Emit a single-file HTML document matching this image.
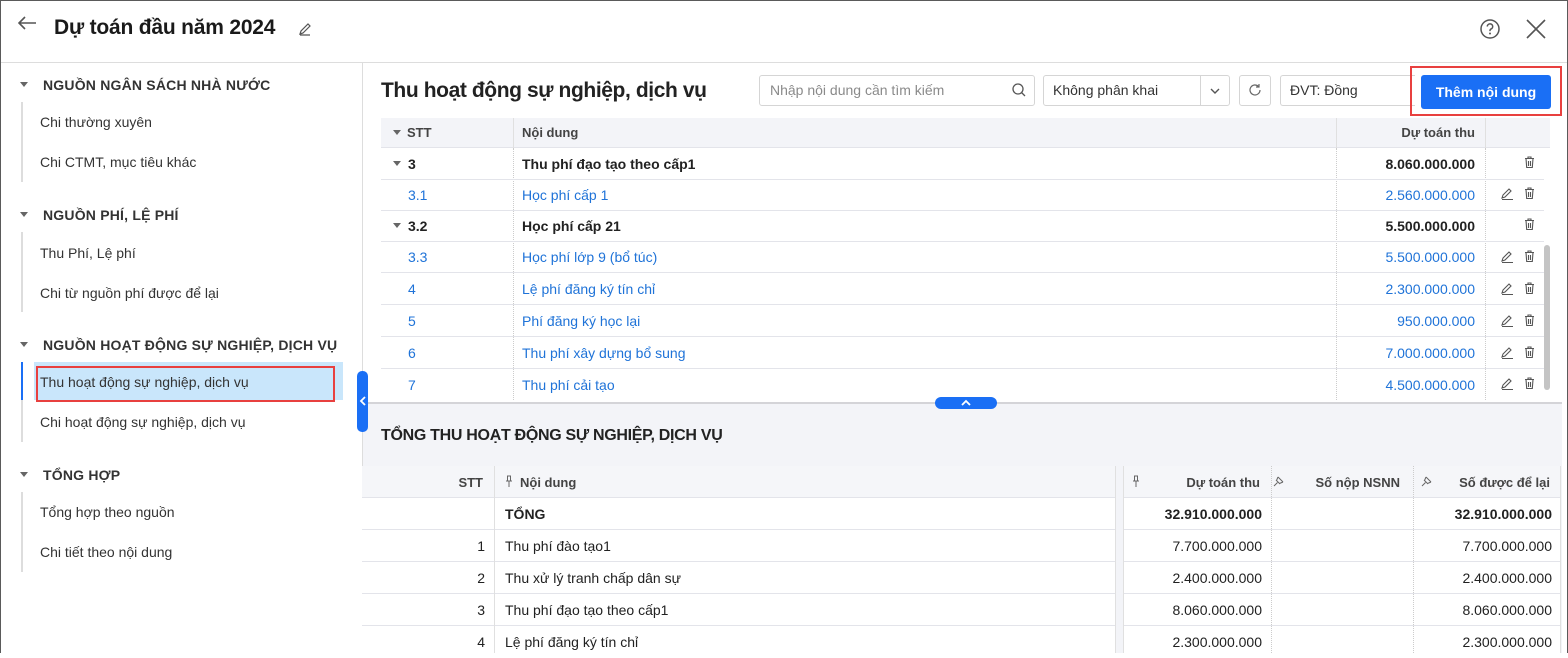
<!DOCTYPE html>
<html><head><meta charset="utf-8"><style>
*{box-sizing:border-box;margin:0;padding:0}
body{width:1568px;height:653px;overflow:hidden;background:#fff;font-family:"Liberation Sans",sans-serif;color:#212121;font-size:14px;position:relative}
.a{position:absolute;white-space:nowrap}
.frame{position:absolute;left:0;top:0;width:1568px;height:653px;border:1px solid #5a5a5a;border-bottom:none;pointer-events:none;z-index:50}
.sb h4{position:absolute;left:43px;font-size:14px;font-weight:bold;letter-spacing:.2px;color:#333}
.tri{position:absolute;width:0;height:0;border-left:4px solid transparent;border-right:4px solid transparent;border-top:5px solid #666}
.item{position:absolute;left:40px;font-size:14px;color:#333}
.vl{position:absolute;left:21px;width:2px;background:#ddd}
.row{position:absolute;left:381px;width:1163px;height:32px;border-bottom:1px solid #e3e4ea}
.row span{position:absolute;top:8px}
.blue{color:#1f73d8}
.b{font-weight:bold;color:#222}
.r2{position:absolute;left:362px;width:1198px;height:32px;border-bottom:1px solid #e3e4ea;background:#fff}
.r2 span{position:absolute;top:8px}
</style></head><body>
<div class="frame"></div>
<svg class="a" style="left:16px;top:14px" width="22" height="18" viewBox="0 0 22 18"><path d="M20 9H3M9 3L3 9l6 6" stroke="#555" stroke-width="1.6" fill="none"/></svg>
<div class="a" style="left:54px;top:16px;font-size:21px;font-weight:bold;color:#1a1a1a;letter-spacing:-0.2px">Dự toán đầu năm 2024</div>
<svg class="a" style="left:297px;top:21px" width="16" height="16" viewBox="0 0 16 16"><path d="M3 13l1-3 7-7 2 2-7 7-3 1zM3 14h10" stroke="#555" stroke-width="1.2" fill="none"/></svg>
<svg class="a" style="left:1479px;top:18px" width="22" height="22" viewBox="0 0 22 22"><circle cx="11" cy="11" r="9" stroke="#555" stroke-width="1.5" fill="none"/><path d="M8.3 8.5a2.7 2.7 0 1 1 3.5 2.6c-.6.3-.8.7-.8 1.4v.6" stroke="#555" stroke-width="1.5" fill="none"/><circle cx="11" cy="15.5" r="1" fill="#555"/></svg>
<svg class="a" style="left:1525px;top:18px" width="22" height="22" viewBox="0 0 22 22"><path d="M2 2l18 18M20 2L2 20" stroke="#555" stroke-width="1.6"/></svg>
<div class="a" style="left:0;top:62px;width:1568px;height:1px;background:#ddd"></div>
<div class="sb">
<div class="tri" style="left:20px;top:82px"></div><h4 style="top:77px">NGUỒN NGÂN SÁCH NHÀ NƯỚC</h4>
<div class="vl" style="top:102px;height:80px"></div>
<div class="item" style="top:114px">Chi thường xuyên</div>
<div class="item" style="top:154px">Chi CTMT, mục tiêu khác</div>
<div class="tri" style="left:20px;top:212px"></div><h4 style="top:207px">NGUỒN PHÍ, LỆ PHÍ</h4>
<div class="vl" style="top:232px;height:80px"></div>
<div class="item" style="top:245px">Thu Phí, Lệ phí</div>
<div class="item" style="top:285px">Chi từ nguồn phí được để lại</div>
<div class="tri" style="left:20px;top:342px"></div><h4 style="top:337px">NGUỒN HOẠT ĐỘNG SỰ NGHIỆP, DỊCH VỤ</h4>
<div class="vl" style="top:362px;height:80px"></div>
<div class="a" style="left:21px;top:362px;width:2px;height:38px;background:#1a6ff5"></div>
<div class="a" style="left:34px;top:362px;width:309px;height:38px;background:#c9e6fb"></div>
<div class="a" style="left:36px;top:366px;width:299px;height:36px;border:2px solid #e8403f"></div>
<div class="item" style="top:374px">Thu hoạt động sự nghiệp, dịch vụ</div>
<div class="item" style="top:414px">Chi hoạt động sự nghiệp, dịch vụ</div>
<div class="tri" style="left:20px;top:472px"></div><h4 style="top:467px">TỔNG HỢP</h4>
<div class="vl" style="top:492px;height:80px"></div>
<div class="item" style="top:504px">Tổng hợp theo nguồn</div>
<div class="item" style="top:544px">Chi tiết theo nội dung</div>
</div>
<div class="a" style="left:362px;top:63px;width:1px;height:590px;background:#ddd"></div>
<div class="a" style="left:357px;top:371px;width:11px;height:61px;background:#1a6ff5;border-radius:5px;z-index:5"></div>
<svg class="a" style="left:359px;top:395px;z-index:6" width="8" height="12" viewBox="0 0 8 12"><path d="M6 2L2 6l4 4" stroke="#fff" stroke-width="1.8" fill="none"/></svg>
<div class="a" style="left:381px;top:79px;font-size:21px;font-weight:bold;color:#222;letter-spacing:-0.4px">Thu hoạt động sự nghiệp, dịch vụ</div>
<div class="a" style="left:759px;top:75px;width:276px;height:31px;border:1px solid #d5d5d5;border-radius:3px"></div>
<div class="a" style="left:770px;top:82px;color:#8a8a8a">Nhập nội dung cần tìm kiếm</div>
<svg class="a" style="left:1011px;top:82px" width="16" height="16" viewBox="0 0 16 16"><circle cx="7" cy="7" r="5" stroke="#555" stroke-width="1.3" fill="none"/><path d="M10.5 10.5l3.5 3.5" stroke="#555" stroke-width="1.3"/></svg>
<div class="a" style="left:1043px;top:75px;width:187px;height:31px;border:1px solid #d5d5d5;border-radius:3px"></div>
<div class="a" style="left:1200px;top:75px;width:1px;height:31px;background:#d5d5d5"></div>
<div class="a" style="left:1053px;top:82px;color:#333">Không phân khai</div>
<svg class="a" style="left:1209px;top:86px" width="12" height="10" viewBox="0 0 12 10"><path d="M2 3l4 4 4-4" stroke="#555" stroke-width="1.4" fill="none"/></svg>
<div class="a" style="left:1239px;top:75px;width:32px;height:31px;border:1px solid #d5d5d5;border-radius:3px"></div>
<svg class="a" style="left:1247px;top:82px" width="16" height="16" viewBox="0 0 16 16"><path d="M13 8a5 5 0 1 1-1.5-3.6M12 2v3h-3" stroke="#666" stroke-width="1.2" fill="none"/></svg>
<div class="a" style="left:1280px;top:75px;width:135px;height:31px;border:1px solid #d5d5d5;border-radius:3px 0 0 3px;border-right:none"></div>
<div class="a" style="left:1290px;top:82px;color:#333">ĐVT: Đồng</div>
<div class="a" style="left:1410px;top:66px;width:152px;height:50px;border:2px solid #e8403f"></div>
<div class="a" style="left:1421px;top:75px;width:130px;height:34px;background:#1a6ff5;border-radius:3px;color:#fff;font-weight:bold;text-align:center;line-height:34px">Thêm nội dung</div>
<div class="a" style="left:381px;top:118px;width:1169px;height:30px;background:#f3f4f8;border-bottom:1px solid #e3e4ea"></div>
<div class="a" style="left:513px;top:118px;width:1px;height:30px;background:#e0e0e0"></div>
<div class="a" style="left:1336px;top:118px;width:1px;height:30px;background:#e0e0e0"></div>
<div class="a" style="left:1485px;top:118px;width:1px;height:30px;background:#e0e0e0"></div>
<div class="tri" style="left:393px;top:130px"></div>
<div class="a b" style="left:407px;top:125px;font-size:13px;color:#444">STT</div>
<div class="a b" style="left:522px;top:125px;font-size:13px;color:#444">Nội dung</div>
<div class="a b" style="left:1380px;top:125px;width:95px;text-align:right;font-size:13px;color:#444">Dự toán thu</div>
<div class="a" style="left:513px;top:148px;height:252px;border-left:1px dotted #ccc"></div>
<div class="a" style="left:1336px;top:148px;height:252px;border-left:1px dotted #ccc"></div>
<div class="a" style="left:1485px;top:148px;height:252px;border-left:1px dotted #ccc"></div>
<div class="a" style="left:1544px;top:245px;width:6px;height:145px;background:#c4c4c4;border-radius:3px"></div>
<div class="row" style="top:148px"><div class="tri" style="left:12px;top:13px"></div><span class="b" style="left:27px">3</span><span class="b" style="left:141px">Thu phí đạo tạo theo cấp1</span><span class="b" style="right:69px">8.060.000.000</span></div>
<div class="row" style="top:179px"><span class="blue" style="left:27px">3.1</span><span class="blue" style="left:141px">Học phí cấp 1</span><span class="blue" style="right:69px">2.560.000.000</span></div>
<div class="row" style="top:210px"><div class="tri" style="left:12px;top:13px"></div><span class="b" style="left:27px">3.2</span><span class="b" style="left:141px">Học phí cấp 21</span><span class="b" style="right:69px">5.500.000.000</span></div>
<div class="row" style="top:241px"><span class="blue" style="left:27px">3.3</span><span class="blue" style="left:141px">Học phí lớp 9 (bổ túc)</span><span class="blue" style="right:69px">5.500.000.000</span></div>
<div class="row" style="top:273px"><span class="blue" style="left:27px">4</span><span class="blue" style="left:141px">Lệ phí đăng ký tín chỉ</span><span class="blue" style="right:69px">2.300.000.000</span></div>
<div class="row" style="top:305px"><span class="blue" style="left:27px">5</span><span class="blue" style="left:141px">Phí đăng ký học lại</span><span class="blue" style="right:69px">950.000.000</span></div>
<div class="row" style="top:337px"><span class="blue" style="left:27px">6</span><span class="blue" style="left:141px">Thu phí xây dựng bổ sung</span><span class="blue" style="right:69px">7.000.000.000</span></div>
<div class="row" style="top:369px;border-bottom:none"><span class="blue" style="left:27px">7</span><span class="blue" style="left:141px">Thu phí cải tạo</span><span class="blue" style="right:69px">4.500.000.000</span></div>
<svg class="a" style="left:1500px;top:154px" width="40" height="240" viewBox="0 0 40 240">
<defs>
<g id="t"><path d="M2 2.5h9M5 2.5V1h3v1.5M3 2.5l.7 9h5.6l.7-9M5.5 5v5M7.5 5v5" stroke="#555" stroke-width="1.1" fill="none"/></g>
<g id="p"><path d="M1 11l1-3 6-6 2 2-6 6-3 1zM1 12.5h11" stroke="#555" stroke-width="1.1" fill="none"/></g>
</defs>
<use href="#t" x="23" y="2"/>
<use href="#p" x="1" y="33"/><use href="#t" x="23" y="33"/>
<use href="#t" x="23" y="64"/>
<use href="#p" x="1" y="96"/><use href="#t" x="23" y="96"/>
<use href="#p" x="1" y="128"/><use href="#t" x="23" y="128"/>
<use href="#p" x="1" y="160"/><use href="#t" x="23" y="160"/>
<use href="#p" x="1" y="192"/><use href="#t" x="23" y="192"/>
<use href="#p" x="1" y="223"/><use href="#t" x="23" y="223"/>
</svg>
<div class="a" style="left:363px;top:403px;width:1199px;height:250px;background:#f3f4f8"></div>
<div class="a" style="left:363px;top:402px;width:1199px;height:2px;background:#d4d4d8"></div>
<div class="a" style="left:935px;top:397px;width:62px;height:12px;background:#1a6ff5;border-radius:6px"></div>
<svg class="a" style="left:960px;top:398px" width="12" height="9" viewBox="0 0 12 9"><path d="M2 7l4-4 4 4" stroke="#fff" stroke-width="1.8" fill="none"/></svg>
<div class="a" style="left:381px;top:427px;font-size:16px;font-weight:bold;color:#222;letter-spacing:-0.3px">TỔNG THU HOẠT ĐỘNG SỰ NGHIỆP, DỊCH VỤ</div>
<div class="a" style="left:362px;top:466px;width:1198px;height:32px;background:#f5f6f9;border-bottom:1px solid #e3e4ea"></div>
<div class="a b" style="left:440px;top:475px;width:43px;text-align:right;font-size:13px;color:#444">STT</div>
<svg class="a" style="left:504px;top:475px" width="10" height="13" viewBox="0 0 10 13"><path d="M3 1h4M3.5 1v5M6.5 1v5M2 6h6M5 6v6" stroke="#666" stroke-width="1" fill="none"/></svg>
<div class="a b" style="left:520px;top:475px;font-size:13px;color:#444">Nội dung</div>
<svg class="a" style="left:1131px;top:475px" width="10" height="13" viewBox="0 0 10 13"><path d="M3 1h4M3.5 1v5M6.5 1v5M2 6h6M5 6v6" stroke="#666" stroke-width="1" fill="none"/></svg>
<div class="a b" style="left:1160px;top:475px;width:100px;text-align:right;font-size:13px;color:#444">Dự toán thu</div>
<svg class="a" style="left:1273px;top:475px" width="12" height="12" viewBox="0 0 12 12"><path d="M1 11l3.5-3.5M3 5l4 4M5 2l5 5M5 2L3.5 5.5M10 7L6.5 8.5" stroke="#666" stroke-width="1" fill="none"/></svg>
<div class="a b" style="left:1300px;top:475px;width:100px;text-align:right;font-size:13px;color:#444">Số nộp NSNN</div>
<svg class="a" style="left:1421px;top:475px" width="12" height="12" viewBox="0 0 12 12"><path d="M1 11l3.5-3.5M3 5l4 4M5 2l5 5M5 2L3.5 5.5M10 7L6.5 8.5" stroke="#666" stroke-width="1" fill="none"/></svg>
<div class="a b" style="left:1440px;top:475px;width:110px;text-align:right;font-size:13px;color:#444">Số được để lại</div>
<div class="r2" style="top:498px"><span class="b" style="left:143px">TỔNG</span><span class="b" style="right:298px">32.910.000.000</span><span class="b" style="right:8px">32.910.000.000</span></div>
<div class="r2" style="top:530px"><span style="right:1075px">1</span><span style="left:143px">Thu phí đào tạo1</span><span style="right:298px">7.700.000.000</span><span style="right:8px">7.700.000.000</span></div>
<div class="r2" style="top:562px"><span style="right:1075px">2</span><span style="left:143px">Thu xử lý tranh chấp dân sự</span><span style="right:298px">2.400.000.000</span><span style="right:8px">2.400.000.000</span></div>
<div class="r2" style="top:594px"><span style="right:1075px">3</span><span style="left:143px">Thu phí đạo tạo theo cấp1</span><span style="right:298px">8.060.000.000</span><span style="right:8px">8.060.000.000</span></div>
<div class="r2" style="top:626px;border-bottom:none"><span style="right:1075px">4</span><span style="left:143px">Lệ phí đăng ký tín chỉ</span><span style="right:298px">2.300.000.000</span><span style="right:8px">2.300.000.000</span></div>
<div class="a" style="left:494px;top:466px;width:1px;height:187px;background:#e0e0e0"></div>
<div class="a" style="left:1115px;top:466px;width:9px;height:187px;background:#f3f4f8;border-left:1px solid #e0e0e0;border-right:1px solid #e0e0e0"></div>
<div class="a" style="left:1271px;top:466px;height:187px;border-left:1px dotted #ccc"></div>
<div class="a" style="left:1413px;top:466px;height:187px;border-left:1px dotted #ccc"></div>
<div class="a" style="left:1560px;top:466px;width:1px;height:187px;background:#e0e0e0"></div>
</body></html>
